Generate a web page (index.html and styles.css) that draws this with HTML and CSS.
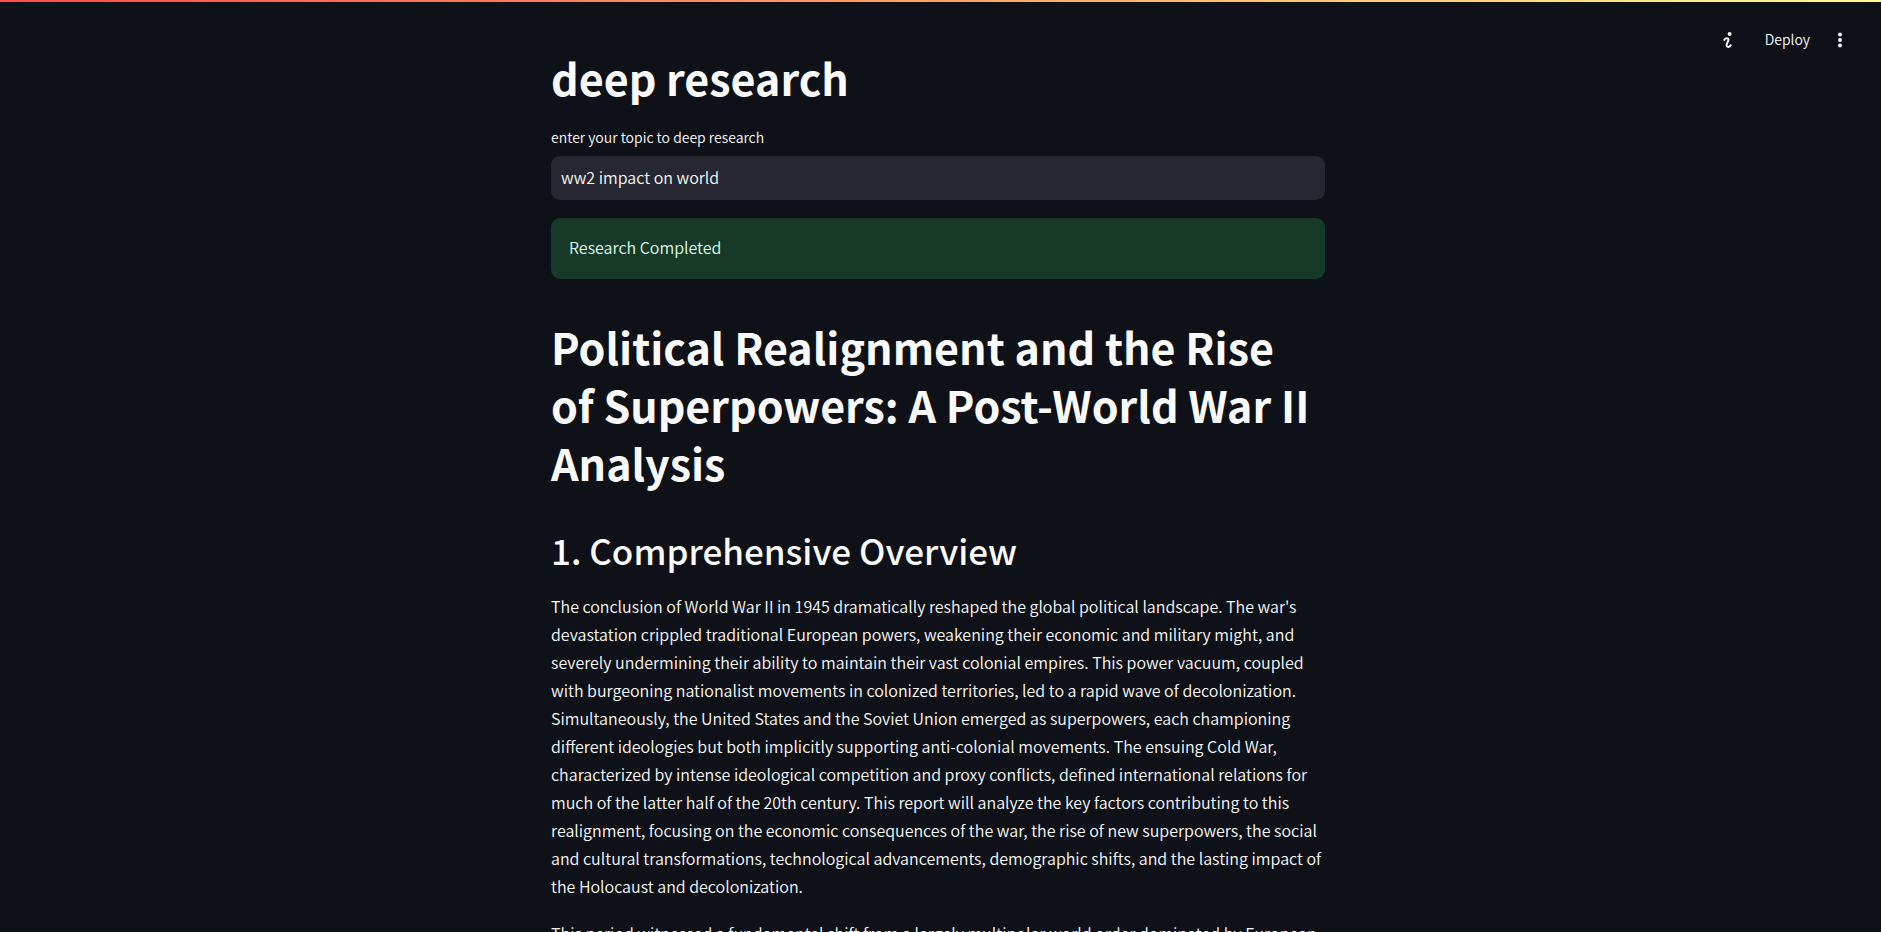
FILE: index.html
```html
<!DOCTYPE html>
<html lang="en">
<head>
<meta charset="utf-8">
<title>deep research</title>
<link rel="stylesheet" href="styles.css">
</head>
<body>
<div class="decoration"></div>
<header class="toolbar">
  <button class="icon-button" type="button" aria-label="Status">
    <svg class="status-icon" viewBox="0 0 18 18" aria-hidden="true">
      <circle cx="11.6" cy="2.9" r="2" fill="currentColor"/>
      <path d="M6.3 8.9C6.9 6.6 11 6.4 10.4 9.2C10 11.2 8.3 12.6 8.6 14.6C9 16.4 11.8 16.4 12.6 14.2" fill="none" stroke="currentColor" stroke-width="2" stroke-linecap="round"/>
    </svg>
  </button>
  <button class="deploy" type="button">Deploy</button>
  <button class="icon-button" type="button" aria-label="Main menu">
    <svg class="menu-icon" viewBox="0 0 18 18" fill="currentColor" aria-hidden="true">
      <circle cx="9" cy="3.5" r="1.9"/><circle cx="9" cy="9" r="1.9"/><circle cx="9" cy="14.5" r="1.9"/>
    </svg>
  </button>
</header>
<main class="content">
  <h1 class="title">deep research</h1>
  <form class="field">
    <label class="label" for="topic">enter your topic to deep research</label>
    <input class="input" id="topic" type="text" value="ww2 impact on world">
  </form>
  <div class="alert" role="status">Research Completed</div>
  <article class="report">
    <h1 class="title">Political Realignment and the Rise<br>of Superpowers: A Post-World War II<br>Analysis</h1>
    <h2 class="subtitle">1. Comprehensive Overview</h2>
    <p class="text">The conclusion of World War II in 1945 dramatically reshaped the global political landscape. The war's<br>
    devastation crippled traditional European powers, weakening their economic and military might, and<br>
    severely undermining their ability to maintain their vast colonial empires. This power vacuum, coupled<br>
    with burgeoning nationalist movements in colonized territories, led to a rapid wave of decolonization.<br>
    Simultaneously, the United States and the Soviet Union emerged as superpowers, each championing<br>
    different ideologies but both implicitly supporting anti-colonial movements. The ensuing Cold War,<br>
    characterized by intense ideological competition and proxy conflicts, defined international relations for<br>
    much of the latter half of the 20th century. This report will analyze the key factors contributing to this<br>
    realignment, focusing on the economic consequences of the war, the rise of new superpowers, the social<br>
    and cultural transformations, technological advancements, demographic shifts, and the lasting impact of<br>
    the Holocaust and decolonization.</p>
    <p class="text">This period witnessed a fundamental shift from a largely multipolar world order dominated by European</p>
  </article>
</main>
</body>
</html>
```
FILE: styles.css
```css
* { box-sizing: border-box; }
html { background: #0e1117; }
body {
  margin: 0;
  padding-right: 5px;
  height: 100vh;
  overflow: hidden;
  background: #0e1117;
  color: #fafafa;
  font-family: "Noto Sans CJK SC", sans-serif;
  font-size: 16px;
  font-weight: 350;
}
.decoration {
  position: absolute;
  inset: 0 0 auto;
  height: 2px;
  background: linear-gradient(90deg, #ff4b4b, #fffd80);
}
.toolbar {
  position: absolute;
  top: 0;
  right: 0;
  display: flex;
  align-items: center;
  gap: 8px;
  height: 80px;
  padding-right: 24px;
}
button {
  border: 0;
  padding: 0;
  background: none;
  color: inherit;
  font: inherit;
}
.icon-button {
  display: grid;
  place-items: center;
  width: 35px;
  height: 35px;
}
.icon-button svg { width: 18px; height: 18px; }
.deploy {
  padding: 0 4px 2px 12px;
  font-size: 14px;
  line-height: 24px;
}
.content {
  max-width: 810px;
  margin: 0 auto;
  padding: 48px 18px 0;
}
.title {
  margin: 0;
  font-size: 43px;
  line-height: 58px;
  font-weight: 700;
  white-space: nowrap;
}
.field {
  display: flex;
  flex-direction: column;
  gap: 7px;
  margin: 19px 0 18px;
}
.label { font-size: 14px; line-height: 24px; }
.input {
  width: 100%;
  height: 44px;
  padding: 0 10px 2px;
  border: 0;
  border-radius: 9px;
  outline: 0;
  background: #262730;
  color: inherit;
  font: inherit;
}
.alert {
  padding: 16px 18px 19px;
  border-radius: 9px;
  background: #173928;
  color: #dffde9;
  line-height: 26px;
}
.report { padding-top: 38px; }
.subtitle {
  margin: 35px 0 18px;
  font-size: 35px;
  line-height: 48px;
  font-weight: 500;
  white-space: nowrap;
}
.text {
  margin: 0 0 19px;
  line-height: 28px;
  white-space: nowrap;
}
```
